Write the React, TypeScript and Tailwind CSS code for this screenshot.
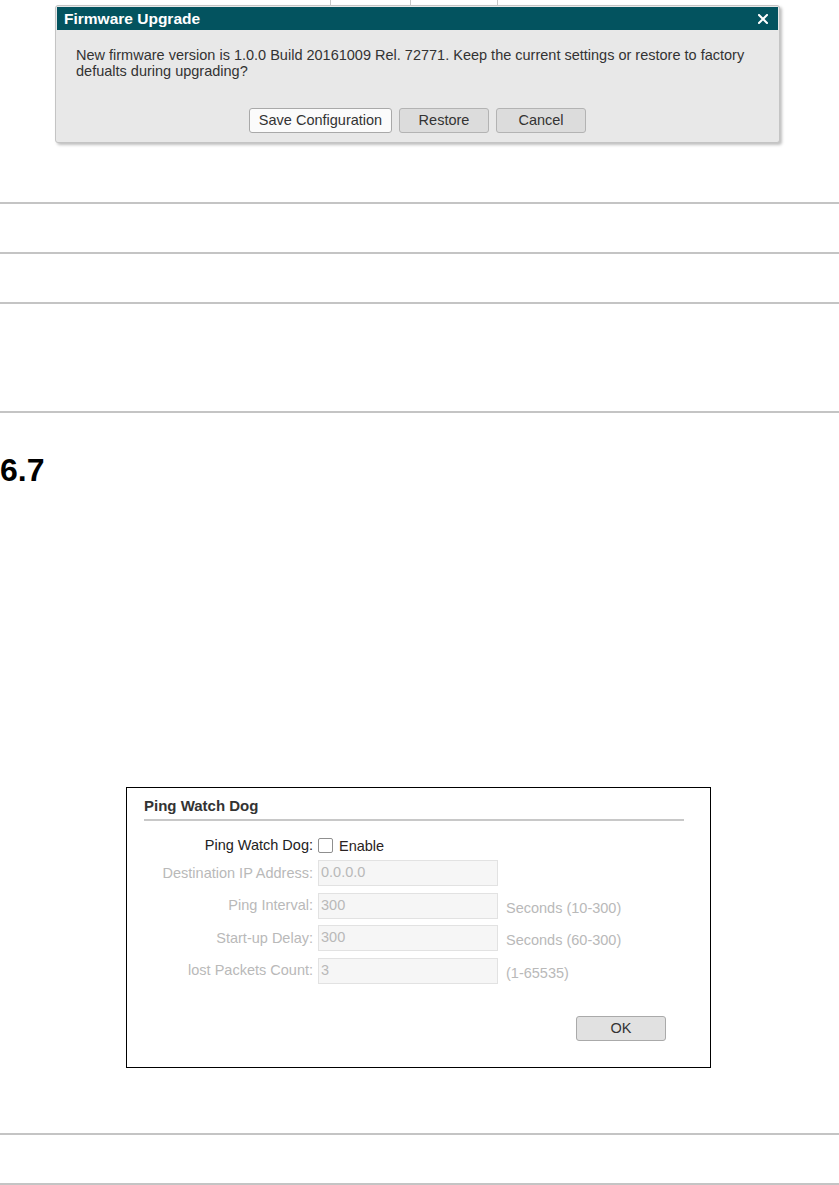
import React from 'react';

const Rule = ({ className = '' }: { className?: string }) => (
  <div className={`h-[2px] w-full bg-[#c4c4c4] ${className}`} />
);

const DialogButton = ({ label, primary, width }: { label: string; primary?: boolean; width: string }) => (
  <button
    className={`h-[25px] ${width} rounded-[3px] border text-[14.5px] leading-none text-[#333] ${
      primary ? 'border-[#a9a9a9] bg-[#fbfbfb]' : 'border-[#b3b3b3] bg-[#dcdcdc]'
    }`}
  >
    {label}
  </button>
);

const FirmwareDialog = () => (
  <div className="ml-[55px] w-[725px] rounded-[3px] border border-[#c4c4c4] bg-[#e8e8e8] p-[1px] shadow-[2px_2px_3px_rgba(0,0,0,0.25)]">
    <div className="flex h-[23px] items-center justify-between bg-[#03535f] pl-[7px] pr-[10px]">
      <span className="text-[15.5px] font-bold leading-none text-white">Firmware Upgrade</span>
      <svg width="10" height="10" viewBox="0 0 10 10">
        <path d="M1 1 L9 9 M9 1 L1 9" stroke="#fff" strokeWidth="2" strokeLinecap="square" />
      </svg>
    </div>
    <div className="pb-[8px]">
      <p className="pl-[19px] pt-[17px] text-[14.5px] leading-[16px] text-[#333]">
        New firmware version is 1.0.0 Build 20161009 Rel. 72771. Keep the current settings or restore to factory
        <br />
        defualts during upgrading?
      </p>
      <div className="mt-[29px] flex justify-center gap-[7px]">
        <DialogButton label="Save Configuration" primary width="w-[143px]" />
        <DialogButton label="Restore" width="w-[90px]" />
        <DialogButton label="Cancel" width="w-[90px]" />
      </div>
    </div>
  </div>
);

const FieldRow = ({ label, value, unit }: { label: string; value: string; unit?: string }) => (
  <div className="flex items-center">
    <span className="w-[191px] pr-[5px] text-right text-[14.5px] leading-none text-[#b9b9b9]">{label}</span>
    <div className="flex h-[26px] w-[180px] items-center border border-[#e2e2e2] bg-[#f6f6f6] pl-[2px] text-[14.5px] text-[#b9b9b9]">
      {value}
    </div>
    {unit && <span className="ml-[8px] pt-[5px] text-[14.5px] leading-none text-[#b9b9b9]">{unit}</span>}
  </div>
);

const PingWatchDog = () => (
  <div className="ml-[126px] h-[281px] w-[585px] border border-black">
    <div className="ml-[17px] mr-[26px] border-b-2 border-[#c8c8c8] pb-[4px] pt-[9px]">
      <h3 className="text-[15px] font-bold leading-[18px] text-[#333]">Ping Watch Dog</h3>
    </div>
    <div className="mt-[14px] flex h-[20px] items-center">
      <span className="w-[191px] pr-[5px] text-right text-[14.5px] leading-none text-[#222]">Ping Watch Dog:</span>
      <span className="h-[15px] w-[15px] rounded-[2px] border border-[#8f8f8f] bg-white" />
      <span className="ml-[6px] pt-[2px] text-[14.5px] leading-none text-[#2a2222]">Enable</span>
    </div>
    <div className="mt-[5px] flex flex-col gap-[6.5px]">
      <FieldRow label="Destination IP Address:" value="0.0.0.0" />
      <FieldRow label="Ping Interval:" value="300" unit="Seconds (10-300)" />
      <FieldRow label="Start-up Delay:" value="300" unit="Seconds (60-300)" />
      <FieldRow label="lost Packets Count:" value="3" unit="(1-65535)" />
    </div>
    <div className="mr-[44px] mt-[32px] flex justify-end">
      <button className="h-[25px] w-[90px] rounded-[3px] border border-[#aaaaaa] bg-[#e1e1e1] text-[14.5px] leading-none text-[#333]">
        OK
      </button>
    </div>
  </div>
);

export default function App() {
  return (
    <div className="h-[1185px] w-[839px] overflow-hidden bg-white font-['Liberation_Sans',Arial,sans-serif]">
      <div className="flex h-[5px]">
        <div className="w-[330px]" />
        <div className="w-px bg-[#c8c8c8]" />
        <div className="w-[79px]" />
        <div className="w-px bg-[#c8c8c8]" />
        <div className="w-[86px]" />
        <div className="w-px bg-[#c8c8c8]" />
      </div>
      <FirmwareDialog />
      <Rule className="mt-[59px]" />
      <Rule className="mt-[48px]" />
      <Rule className="mt-[48px]" />
      <Rule className="mt-[107px]" />
      <h2 className="mt-[41px] text-[32px] font-bold leading-[32px] text-black">6.7</h2>
      <div className="mt-[301px]">
        <PingWatchDog />
      </div>
      <Rule className="mt-[65px]" />
      <Rule className="mt-[48px]" />
    </div>
  );
}
